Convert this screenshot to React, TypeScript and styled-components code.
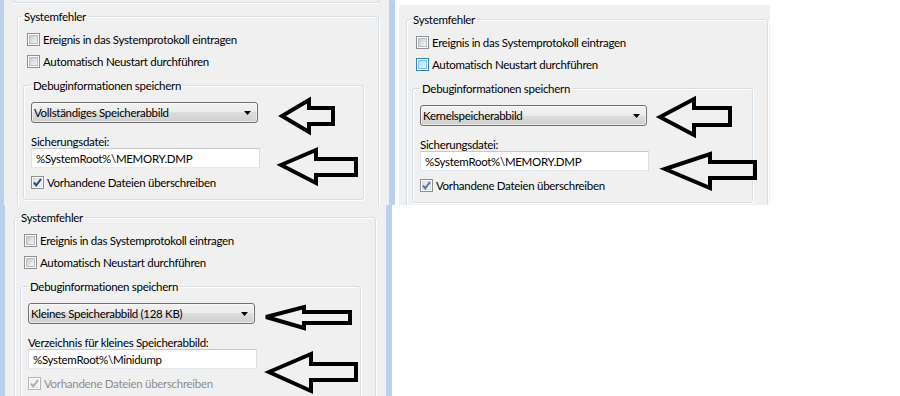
import React from "react";
import styled, { createGlobalStyle } from "styled-components";

type BoxState = "off" | "hover" | "on" | "onDim" | "disabled";

const GlobalStyle = createGlobalStyle`
  html, body {
    margin: 0;
    padding: 0;
    background: #fff;
  }
  body {
    font-family: "Segoe UI", Lato, "Liberation Sans", sans-serif;
    font-size: 11.5px;
    letter-spacing: -0.3px;
    color: #000;
  }
  * {
    box-sizing: border-box;
  }
`;

const Page = styled.div`
  width: 900px;
  height: 396px;
  display: flex;
  flex-direction: column;
  overflow: hidden;
  background: #fff;
`;

const TopRow = styled.div`
  display: flex;
`;

const Panel = styled.div<{
  $width: number;
  $height: number;
  $pad: string;
  $left: number;
  $right?: number;
  $frame?: boolean;
}>`
  position: relative;
  flex: none;
  width: ${(p) => p.$width}px;
  height: ${(p) => p.$height}px;
  padding: ${(p) => p.$pad};
  background: #f0f0f0;
  border-left: ${(p) => p.$left}px solid #b9d1ea;
  border-right: ${(p) => p.$right ?? 0}px solid #b9d1ea;
  box-shadow: ${(p) => (p.$frame ? "inset 4px 5px 0 #fff" : "none")};
  overflow: hidden;
`;

const PrevBox = styled.div`
  height: 3px;
  margin: 0 -1px 6px -5px;
  border: 1px solid #d5dfe5;
  border-top: none;
  border-radius: 0 0 3px 3px;
  box-shadow: 0 1px 0 #fff;
`;

const OuterGroup = styled.fieldset`
  margin: 0;
  padding: 4px 0 24px 0;
  min-width: 0;
  border: 1px solid #d5dfe5;
  border-radius: 3px;
  box-shadow: inset 1px 1px 0 #fff, 1px 1px 0 #fff;
`;

const InnerGroup = styled.fieldset`
  margin: 6px 14px 0 5px;
  padding: 9px 7px 6px 7px;
  min-width: 0;
  border: 1px solid #d5dfe5;
  border-radius: 3px;
  box-shadow: inset 1px 1px 0 #fff, 1px 1px 0 #fff;
`;

const Legend = styled.legend<{ $indent: number }>`
  margin-left: ${(p) => p.$indent}px;
  padding: 0 2px;
  line-height: 15px;
`;

const Options = styled.div`
  padding-left: 9px;
`;

const CheckRow = styled.div<{ $disabled?: boolean }>`
  display: flex;
  align-items: center;
  gap: 3px;
  height: 22px;
  line-height: 15px;
  white-space: nowrap;
  color: ${(p) => (p.$disabled ? "#8d8d8d" : "#000")};
`;

const outerColor: Record<BoxState, string> = {
  off: "#8e8f8f",
  hover: "#3c7fb1",
  on: "#8e8f8f",
  onDim: "#8e8f8f",
  disabled: "#b4b4b4",
};

const fillStyle: Record<BoxState, string> = {
  off: "border: 1px solid #b9bdc2; background: linear-gradient(135deg, #c6cacf, #f5f5f5);",
  hover: "border: 1px solid #79c6f9; background: linear-gradient(135deg, #b1dffd, #eaf7fe);",
  on: "border: 1px solid #d7dadd; background: linear-gradient(135deg, #e2e4e7, #fbfbfb);",
  onDim: "border: 1px solid #d7dadd; background: linear-gradient(135deg, #e2e4e7, #fbfbfb);",
  disabled: "border: 1px solid #ececec; background: #f4f4f4;",
};

const checkColor: Record<BoxState, string> = {
  off: "transparent",
  hover: "transparent",
  on: "#26468c",
  onDim: "#60739f",
  disabled: "#adadad",
};

const Box = styled.span<{ $state: BoxState }>`
  position: relative;
  flex: none;
  display: flex;
  width: 13px;
  height: 13px;
  padding: 1px;
  border: 1px solid ${(p) => outerColor[p.$state]};
  background: #fff;
`;

const BoxFill = styled.span<{ $state: BoxState }>`
  flex: 1;
  ${(p) => fillStyle[p.$state]}
`;

const Tick = styled.svg`
  position: absolute;
  left: -1px;
  top: -1px;
  width: 13px;
  height: 13px;
`;

const Combo = styled.div`
  display: flex;
  align-items: center;
  justify-content: space-between;
  width: 227px;
  height: 21px;
  padding: 0 6px 0 2px;
  border: 1px solid #707070;
  border-radius: 3px;
  background: linear-gradient(#f2f2f2 0%, #ebebeb 50%, #dddddd 50%, #cfcfcf 100%);
  box-shadow: inset 0 0 0 1px rgba(255, 255, 255, 0.55);
  line-height: 15px;
  white-space: nowrap;
`;

const FieldLabel = styled.div`
  margin-top: 12px;
  line-height: 13px;
  white-space: nowrap;
`;

const TextField = styled.input`
  display: block;
  width: 229px;
  height: 20px;
  margin: 0;
  padding: 0 0 0 4px;
  font: inherit;
  letter-spacing: inherit;
  color: #000;
  background: #fff;
  border: 1px solid;
  border-color: #c5c8cf #dbdfe6 #e3e9ef #e2e3ea;
  outline: none;
`;

const KeepRow = styled.div`
  margin-top: 3px;
`;

const Overlay = styled.svg`
  position: absolute;
  left: 0;
  top: 0;
  width: 100%;
  height: 100%;
  overflow: visible;
  pointer-events: none;
`;

function Check({ state, children }: { state: BoxState; children: React.ReactNode }) {
  const checked = state === "on" || state === "onDim" || state === "disabled";
  return (
    <CheckRow $disabled={state === "disabled"}>
      <Box $state={state}>
        <BoxFill $state={state} />
        {checked && (
          <Tick viewBox="0 0 13 13">
            <polyline
              points="3,6.5 5.3,9.3 10,3"
              fill="none"
              stroke={checkColor[state]}
              strokeWidth={2}
            />
          </Tick>
        )}
      </Box>
      {children}
    </CheckRow>
  );
}

function Arrows({ shapes }: { shapes: string[] }) {
  return (
    <Overlay>
      {shapes.map((pts) => (
        <polygon
          key={pts}
          points={pts}
          fill="none"
          stroke="#000"
          strokeWidth={4}
          strokeLinejoin="miter"
          strokeMiterlimit={3}
        />
      ))}
    </Overlay>
  );
}

interface DialogProps {
  mode: string;
  fileLabel: string;
  path: string;
  autoBox: BoxState;
  keepBox: BoxState;
}

function Dialog({ mode, fileLabel, path, autoBox, keepBox }: DialogProps) {
  return (
    <OuterGroup>
      <Legend $indent={4}>Systemfehler</Legend>
      <Options>
        <Check state="off">Ereignis in das Systemprotokoll eintragen</Check>
        <Check state={autoBox}>Automatisch Neustart durchführen</Check>
      </Options>
      <InnerGroup>
        <Legend $indent={0}>Debuginformationen speichern</Legend>
        <Combo>
          <span>{mode}</span>
          <svg width="7" height="4" viewBox="0 0 7 4">
            <polygon points="0,0 7,0 3.5,4" fill="#000" />
          </svg>
        </Combo>
        <FieldLabel>{fileLabel}</FieldLabel>
        <TextField readOnly value={path} />
        <KeepRow>
          <Check state={keepBox}>Vorhandene Dateien überschreiben</Check>
        </KeepRow>
      </InnerGroup>
    </OuterGroup>
  );
}

export default function App() {
  return (
    <Page>
      <GlobalStyle />
      <TopRow>
        <Panel $width={389} $height={205} $pad="0 10px 0 13px" $left={4}>
          <PrevBox />
          <Dialog
            mode="Vollständiges Speicherabbild"
            fileLabel="Sicherungsdatei:"
            path="%SystemRoot%\MEMORY.DMP"
            autoBox="off"
            keepBox="on"
          />
          <Arrows
            shapes={[
              "278,116 305,100 305,108 329,108 329,124 305,124 305,132",
              "277,165 312,150 312,159 352,159 352,175 312,175 312,183",
            ]}
          />
        </Panel>
        <Panel $width={381} $height={205} $pad="12px 2px 0 11px" $left={6} $frame>
          <Dialog
            mode="Kernelspeicherabbild"
            fileLabel="Sicherungsdatei:"
            path="%SystemRoot%\MEMORY.DMP"
            autoBox="hover"
            keepBox="onDim"
          />
          <Arrows
            shapes={[
              "265,117 299,99 299,108 335,108 335,125 299,125 299,135",
              "270,169 315,154 315,162 360,162 360,178 315,178 315,188",
            ]}
          />
        </Panel>
      </TopRow>
      <Panel $width={392} $height={191} $pad="5px 10px 0 9px" $left={5} $right={6}>
        <Dialog
          mode="Kleines Speicherabbild (128 KB)"
          fileLabel="Verzeichnis für kleines Speicherabbild:"
          path="%SystemRoot%\Minidump"
          autoBox="off"
          keepBox="disabled"
        />
        <Arrows
          shapes={[
            "261,112 299,102 299,107 345,107 345,118 299,118 299,123",
            "264,167 306,149 306,159 351,159 351,175 306,175 306,186",
          ]}
        />
      </Panel>
    </Page>
  );
}
